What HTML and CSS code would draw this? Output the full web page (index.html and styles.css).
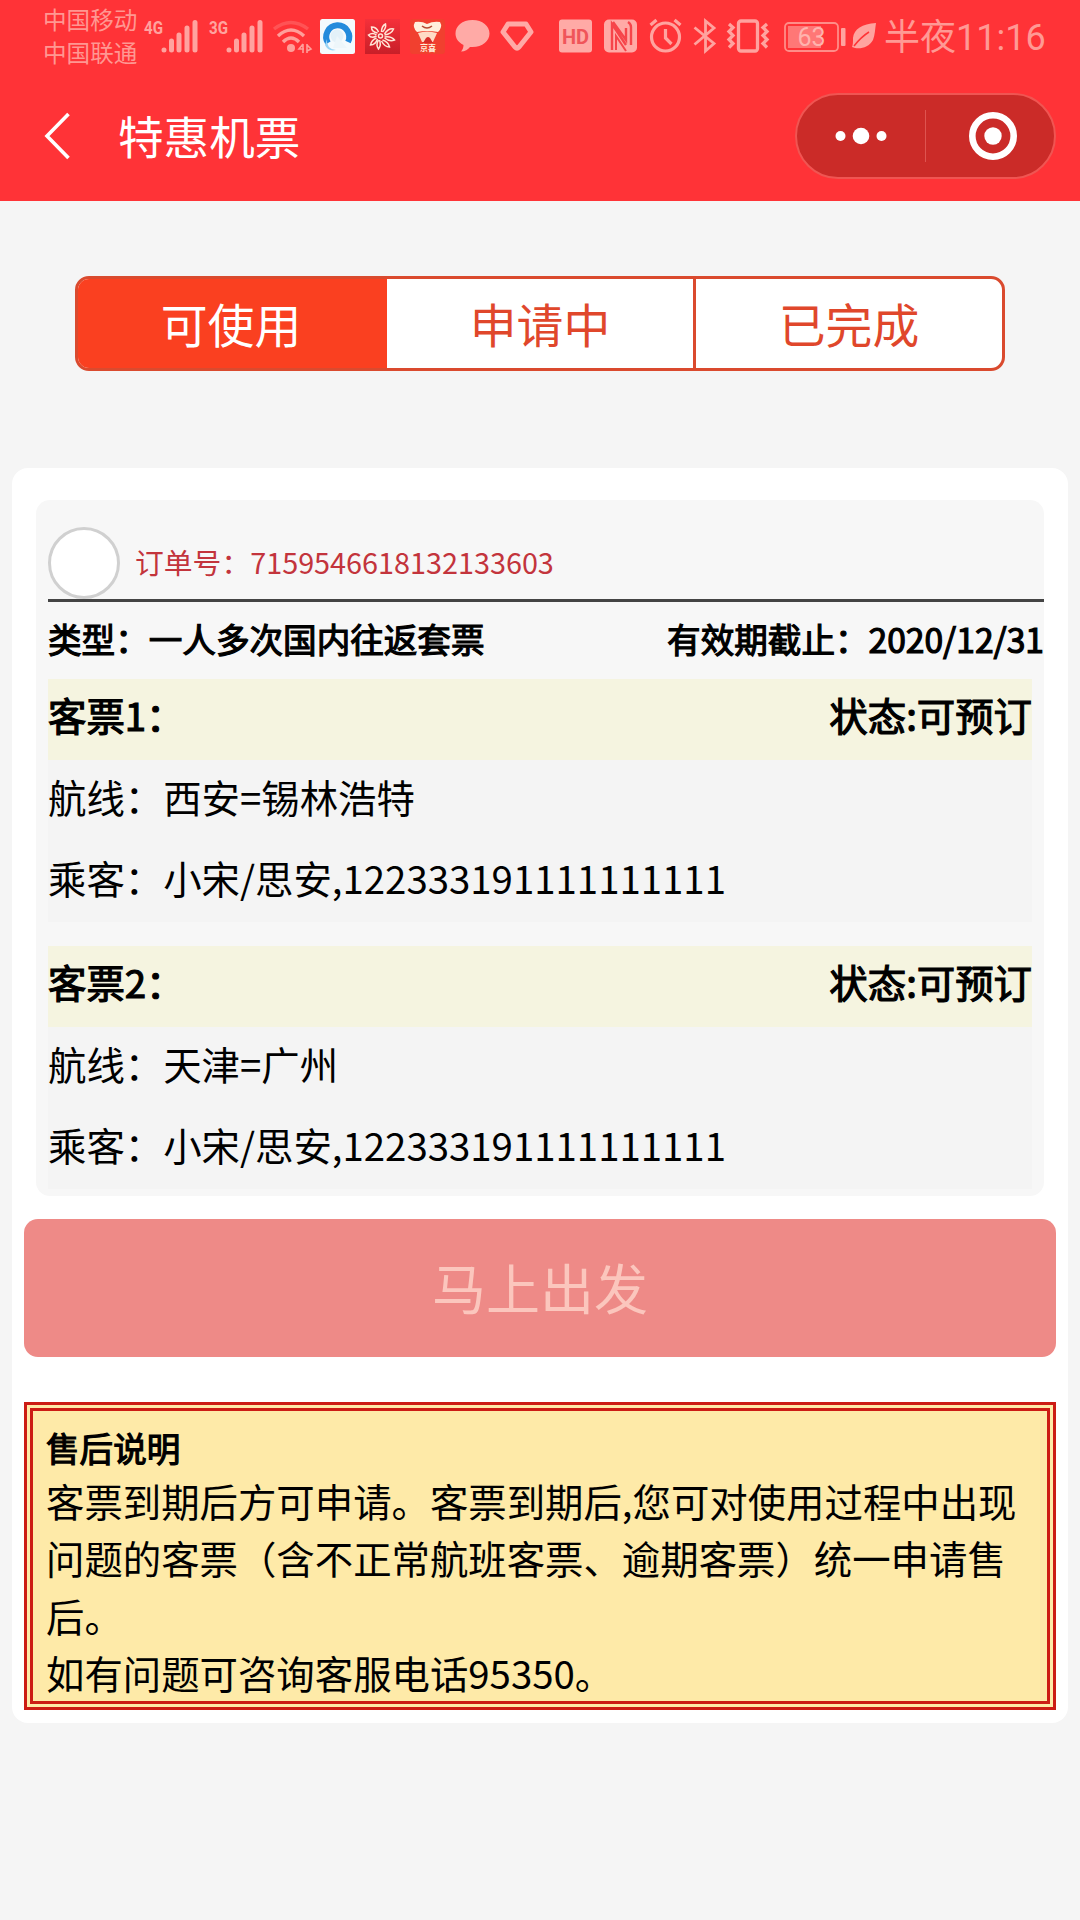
FILE: index.html
```html
<!DOCTYPE html>
<html lang="zh-CN">
<head>
    <meta charset="UTF-8">
    <title>特惠机票</title>
    <link rel="stylesheet" href="styles.css">
</head>
<body>
    <header class="header">
        <div class="status-bar">
            <div class="carrier">
                <span>中国移动</span>
                <span>中国联通</span>
            </div>
            <svg class="icon signal" width="56" height="36" viewBox="0 0 56 36">
                <text x="0" y="15" class="net" textLength="19" lengthAdjust="spacingAndGlyphs">4G</text>
                <path class="bars" d="M20 31v0M27.500 22v9M35 16v15M43 9v22M51 3.500v27.500"/>
            </svg>
            <svg class="icon signal second" width="56" height="36" viewBox="0 0 56 36">
                <text x="0" y="15" class="net" textLength="19" lengthAdjust="spacingAndGlyphs">3G</text>
                <path class="bars" d="M20 31v0M27.500 22v9M35 16v15M43 9v22M51 3.500v27.500"/>
            </svg>
            <svg class="icon wifi" width="42" height="36" viewBox="0 0 42 36">
                <g fill="none" stroke="#ff9f9a" stroke-width="3.400">
                    <path d="M2 10Q19 -3 36 10" opacity=".3"/>
                    <path d="M6 17Q19 5 32 17"/>
                    <path d="M11 23Q19 15 27 23"/>
                </g>
                <circle cx="19" cy="29" r="4" fill="#ff9f9a"/>
                <path d="M31 25v9M31 25l-4 5h5M35 25v9M35 26l4 4-4 2" fill="none" stroke="#ff9f9a" stroke-width="1.600"/>
            </svg>
            <svg class="icon browser" width="35" height="35" viewBox="0 0 35 35">
                <rect width="35" height="35" rx="2.500" fill="#f4fafd"/>
                <path d="M8 24A11.500 11.500 0 1 1 28 23" fill="none" stroke="#238bdc" stroke-width="6"/>
                <path d="M7 20Q6 30 16 31Q8 33 5 26z" fill="#9ad4f5"/>
                <circle cx="17" cy="17" r="6.500" fill="#e3f1f8"/>
                <path d="M17 17l10 12H13z" fill="#edf6fa"/>
            </svg>
            <svg class="icon flower" width="35" height="35" viewBox="0 0 35 35">
                <defs>
                    <linearGradient id="flowerBg" x1="0" y1="0" x2="0" y2="1">
                        <stop offset="0" stop-color="#f5303a"/>
                        <stop offset="1" stop-color="#c81f28"/>
                    </linearGradient>
                </defs>
                <rect width="35" height="35" fill="url(#flowerBg)"/>
                <g transform="translate(15.500 17)" fill="none" stroke="#ffe5d6" stroke-width="1.500">
                    <circle r="2"/>
                    <path d="M1-4Q1-10 5-12Q6-8 2-4"/>
                    <path d="M4-2Q8-8 13-7Q11-2 4-1"/>
                    <path d="M4 1Q11 0 14 4Q9 6 4 2"/>
                    <path d="M2 4Q8 6 9 11Q4 11 1 5"/>
                    <path d="M-1 4Q1 9-2 13Q-5 9-2 4"/>
                    <path d="M-3 3Q-5 9-10 9Q-9 4-4 2"/>
                    <path d="M-4 0Q-9 3-12-1Q-8-4-4-1"/>
                    <path d="M-3-3Q-9-4-9-9Q-4-9-2-4"/>
                </g>
            </svg>
            <svg class="icon mascot" width="35" height="35" viewBox="0 0 35 35">
                <rect width="35" height="35" rx="3" fill="#f1402f"/>
                <path d="M5 3Q12 2 17 5Q23 2 30 3Q33 8 28 13Q17 11 7 13Q2 8 5 3z" fill="#fff1dc"/>
                <path d="M12 7q5 4 10 0" fill="none" stroke="#b54b32" stroke-width="1.500"/>
                <path d="M8 14Q17 11 27 14L23 23H12z" fill="#ffdcc5"/>
                <path d="M13 24l3-5q2-2 4 0l3 5z" fill="#d92d28"/>
                <text x="10" y="32" class="mascot-name">京喜</text>
            </svg>
            <svg class="icon chat" width="35" height="34" viewBox="0 0 35 34">
                <path d="M17.500 1C7 1 .5 7 .5 14.500c0 5 3 9 8 11.500 0 3-1 5-2.500 6.500 4 0 7-2 9-4.500h2.500c10 0 17-6 17-13.500S27.500 1 17.500 1z" fill="#ffaaa6"/>
            </svg>
            <svg class="icon gem" width="34" height="34" viewBox="0 0 34 34">
                <path d="M8 5h18l5 8-12 15q-2 2-4 0L3 13z" fill="none" stroke="#ffaaa6" stroke-width="5" stroke-linejoin="round"/>
            </svg>
            <svg class="icon hd" width="34" height="34" viewBox="0 0 34 34">
                <rect width="33" height="33" rx="3" y=".5" fill="#ffaaa6"/>
                <text x="16.500" y="24.500" text-anchor="middle" class="hd-text">HD</text>
            </svg>
            <svg class="icon nfc" width="34" height="34" viewBox="0 0 34 34">
                <rect width="33" height="33" rx="5" y=".5" fill="#ffaaa6"/>
                <path d="M8 31V5l14 21M9 3l13 18V9M24 3q3 2 3 5v18" fill="none" stroke="#f6454a" stroke-width="2.400"/>
                <path d="M12 31V17l10 15" fill="none" stroke="#f6454a" stroke-width="2"/>
            </svg>
            <svg class="icon alarm" width="34" height="34" viewBox="0 0 34 34">
                <g fill="none" stroke="#ffa39f" stroke-width="3.200">
                    <circle cx="16.500" cy="18" r="14"/>
                    <path d="M16.500 10v9l6 6M1.500 6l6-5M31.500 6l-6-5"/>
                </g>
            </svg>
            <svg class="icon bluetooth" width="24" height="34" viewBox="0 0 24 34">
                <path d="M1.500 8.500l19.500 16-8.500 7.500V2l8.500 7L1.500 25.500" fill="none" stroke="#ffa39f" stroke-width="2.800"/>
            </svg>
            <svg class="icon vibrate" width="43" height="34" viewBox="0 0 43 34">
                <g fill="none" stroke="#ffa39f" stroke-width="3.300">
                    <rect x="11.500" y="2" width="19" height="30" rx="2.500"/>
                    <path d="M2 5l4 3.500-4 4 4 4-4 4 4 4-4 4M40 5l-4 3.500 4 4-4 4 4 4-4 4 4 4"/>
                </g>
            </svg>
            <svg class="icon battery" width="62" height="31" viewBox="0 0 62 31">
                <rect x="1" y="1" width="53" height="28" rx="4" fill="none" stroke="#ff8d88" stroke-width="1.800"/>
                <rect x="4" y="4" width="33" height="22" fill="#ff7776"/>
                <rect x="57" y="6" width="4.500" height="18" rx="1" fill="#ffa39f"/>
                <text x="27.500" y="24" text-anchor="middle" class="battery-text">63</text>
            </svg>
            <svg class="icon leaf" width="25" height="26" viewBox="0 0 25 26">
                <path d="M24 0C10 1 2 6 1 15c0 4 0 7-1 9l3 1c7 1 14-1 18-8 2-5 2-11 3-17z" fill="#ffa39f"/>
                <path d="M2 23Q9 14 17 9" fill="none" stroke="#ff3336" stroke-width="1.500"/>
            </svg>
            <span class="time">半夜11:16</span>
        </div>
        <div class="nav">
            <svg class="back" width="28" height="48" viewBox="0 0 28 48">
                <path d="M24.500 2L3 24l21.500 22" fill="none" stroke="#fff" stroke-width="3.600"/>
            </svg>
            <h1>特惠机票</h1>
            <div class="capsule">
                <div class="capsule-btn">
                    <svg width="54" height="20" viewBox="0 0 54 20" fill="#fff">
                        <circle cx="6.500" cy="10" r="5"/>
                        <circle cx="27" cy="10" r="8.300"/>
                        <circle cx="47.500" cy="10" r="5"/>
                    </svg>
                </div>
                <div class="capsule-line"></div>
                <div class="capsule-btn home">
                    <svg width="50" height="50" viewBox="0 0 50 50">
                        <circle cx="25" cy="25" r="20.700" fill="none" stroke="#fff" stroke-width="6.600"/>
                        <circle cx="25" cy="25" r="8.700" fill="#fff"/>
                    </svg>
                </div>
            </div>
        </div>
    </header>

    <div class="tabs">
        <div class="tab active">可使用</div>
        <div class="tab">申请中</div>
        <div class="tab">已完成</div>
    </div>

    <div class="card">
        <div class="order">
            <div class="order-head">
                <span class="radio"></span>
                <span class="order-no">订单号：7159546618132133603</span>
            </div>
            <div class="order-info">
                <span>类型：一人多次国内往返套票</span>
                <span>有效期截止：2020/12/31</span>
            </div>
            <div class="ticket">
                <div class="ticket-head">
                    <span>客票1：</span>
                    <span>状态:可预订</span>
                </div>
                <p>航线：西安=锡林浩特</p>
                <p>乘客：小宋/思安,122333191111111111</p>
            </div>
            <div class="ticket">
                <div class="ticket-head">
                    <span>客票2：</span>
                    <span>状态:可预订</span>
                </div>
                <p>航线：天津=广州</p>
                <p>乘客：小宋/思安,122333191111111111</p>
            </div>
        </div>
        <button class="go-btn" disabled>马上出发</button>
        <div class="notice">
            <h2>售后说明</h2>
            <p>客票到期后方可申请。客票到期后,您可对使用过程中出现问题的客票（含不正常航班客票、逾期客票）统一申请售后。</p>
            <p>如有问题可咨询客服电话95350。</p>
        </div>
    </div>
</body>
</html>
```
FILE: styles.css
```css
* {
    box-sizing: border-box;
}

body {
    font-family: "Noto Sans CJK SC", sans-serif;
    background-color: #f5f5f5;
    color: #000;
    margin: 0;
    min-height: 1920px;
}

h1, h2, p {
    margin: 0;
    font-weight: normal;
}

/* header */
.header {
    background-color: #ff3337;
    height: 201px;
}

.status-bar {
    display: flex;
    align-items: flex-start;
    height: 72px;
    padding: 0 0 0 43px;
}

.icon {
    flex: none;
    margin-top: 19px;
    overflow: visible;
}

.carrier {
    display: flex;
    flex-direction: column;
    width: 101px;
    padding-top: 3px;
    font-size: 23.6px;
    line-height: 33px;
    color: #ff9792;
    white-space: nowrap;
}

.net {
    font: bold 18px Roboto, sans-serif;
    fill: #ffa39f;
}

.bars {
    fill: none;
    stroke: #ffa39f;
    stroke-width: 5;
    stroke-linecap: round;
}

.second {
    margin-left: 9px;
}

.wifi {
    margin-left: 7px;
}

.browser {
    margin-left: 6px;
}

.flower {
    margin-left: 10px;
}

.mascot {
    margin-left: 10px;
}

.mascot-name {
    font-size: 8px;
    font-weight: bold;
    fill: #fff1dc;
}

.chat {
    margin-left: 10px;
}

.gem {
    margin-left: 10px;
}

.hd {
    margin-left: 25px;
}

.hd-text {
    font: bold 20px Roboto, sans-serif;
    fill: #f0555a;
}

.nfc {
    margin-left: 11px;
}

.alarm {
    margin-left: 11px;
}

.bluetooth {
    margin-left: 10px;
}

.vibrate {
    margin-left: 10px;
}

.battery {
    margin: 22px 0 0 14px;
}

.battery-text {
    font: 25px Roboto, sans-serif;
    fill: #ffb3ae;
}

.leaf {
    margin: 23px 0 0 6px;
}

.time {
    margin: 12px 0 0 7px;
    font-family: Roboto, "Noto Sans CJK SC", sans-serif;
    font-size: 36px;
    line-height: 52px;
    color: #ff9994;
    white-space: nowrap;
}

.nav {
    display: flex;
    align-items: center;
    height: 128px;
    padding: 0 24px 0 44px;
}

.back {
    flex: none;
}

.nav h1 {
    flex: 1;
    margin-left: 46px;
    padding-bottom: 2px;
    font-size: 45.6px;
    line-height: 66px;
    color: #fff;
}

.capsule {
    display: flex;
    align-items: center;
    width: 261px;
    height: 86px;
    background-color: #cb2b28;
    border: 2px solid #f05552;
    border-radius: 43px;
}

.capsule-btn {
    flex: 1;
    display: flex;
    align-items: center;
    justify-content: center;
}

.capsule-btn.home svg {
    margin-left: 5px;
}

.capsule-line {
    width: 1px;
    height: 52px;
    background-color: #de5450;
}

/* tabs */
.tabs {
    display: flex;
    width: 930px;
    height: 95px;
    margin: 75px 75px 97px;
    background-color: #fff;
    border: 3px solid #da4a2e;
    border-radius: 14px;
    overflow: hidden;
}

.tab {
    flex: 1;
    font-size: 46.8px;
    line-height: 87px;
    text-align: center;
    color: #e0472b;
}

.tab + .tab {
    border-left: 3px solid #da4a2e;
}

.tab.active {
    background-color: #fa4020;
    color: #fff;
}

.tab.active + .tab {
    border-left-color: #fa4020;
}

/* order card */
.card {
    margin: 0 12px;
    height: 1255px;
    padding: 32px 12px 0;
    background-color: #fff;
    border-radius: 16px;
}

.order {
    height: 696px;
    margin: 0 12px;
    padding-left: 12px;
    background-color: #f7f7f7;
    border-radius: 14px;
}

.order-head {
    display: flex;
    align-items: flex-end;
    height: 102px;
    border-bottom: 3px solid #444;
}

.radio {
    width: 72px;
    height: 72px;
    background-color: #fff;
    border: 3px solid #d0d0d0;
    border-radius: 50%;
}

.order-no {
    margin-left: 15px;
    font-size: 28.8px;
    line-height: 74px;
    color: #c3343c;
}

/* 中等字重，数字宽度保持常规 */
.order-info,
.ticket-head,
.notice h2 {
    -webkit-text-stroke: 1.2px #000;
}

.order-info {
    display: flex;
    justify-content: space-between;
    height: 77px;
    font-size: 33.6px;
    line-height: 73px;
}

.ticket {
    margin: 0 12px 24px 0;
    background-color: #f4f4f4;
    font-size: 38.4px;
    line-height: 56px;
}

.ticket:last-child {
    margin-bottom: 0;
}

.ticket-head {
    display: flex;
    justify-content: space-between;
    padding: 7px 0 18px;
    background-color: #f5f4e0;
}

.ticket p {
    padding: 8px 0 17px;
}

.go-btn {
    display: block;
    width: 100%;
    height: 138px;
    margin: 23px 0 45px;
    padding: 0 0 4px;
    background-color: #ee8a87;
    border: none;
    border-radius: 14px;
    font-family: inherit;
    font-size: 54px;
    color: #fbc6bd;
}

/* after-sale notice */
.notice {
    height: 308px;
    padding: 12px 13px 0;
    background-color: #feeaa8;
    border: 9px double #cc1c14;
    font-size: 38.4px;
    line-height: 57.4px;
}

.notice h2 {
    font-size: 33.6px;
    line-height: 49px;
}
```
